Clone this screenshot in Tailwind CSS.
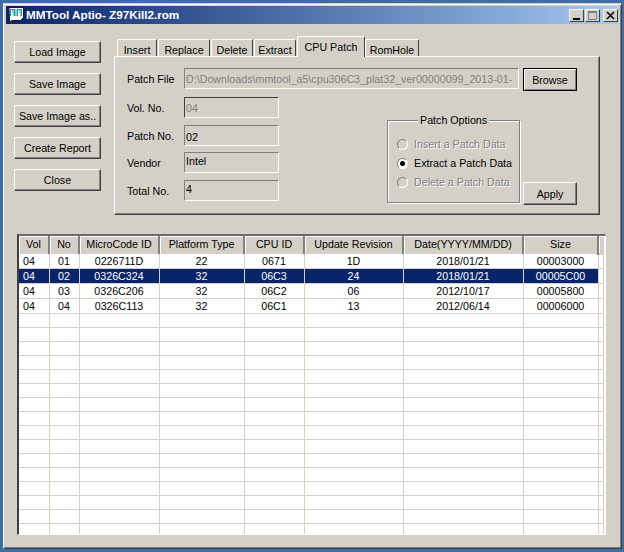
<!doctype html>
<html>

<head>
    <meta charset="UTF-8">
    <meta name="viewport" content="width=device-width, initial-scale=1.0">
    <script src="https://cdn.jsdelivr.net/npm/@tailwindcss/browser@4"></script>
</head>

<body class="w-[624px] h-[552px] overflow-hidden bg-[#3a6ea5] font-['Liberation_Sans',sans-serif] text-[10.7px] leading-[14px] text-black">
    <!-- window -->
    <div class="mt-[3px] ml-[3px] w-[619px] h-[546px] bg-[#d4d0c8] border border-t-[#d4d0c8] border-l-white border-r-[#404040] border-b-[#404040] shadow-[inset_0_1px_0_white,inset_-1px_-1px_0_#808080] p-[2px] flex flex-col">
        <!-- title bar -->
        <div class="h-[18px] shrink-0 flex items-center pl-[2px] pr-[1px] bg-gradient-to-r from-[#0a246a] to-[#a6caf0]">
            <svg class="w-4 h-4 shrink-0" viewBox="0 0 16 16">
                <path d="M1 .5h14.500v10l-3 3H4l-2.500 2z" fill="#fff" stroke="#0a1a40" />
                <rect x="2" y="2" width="5.500" height="7" fill="#1f9a94" />
                <rect x="8.500" y="2" width="5.500" height="7" fill="#1f9a94" />
                <path d="M3 9V3h1v3h.500V3h1v6M10 9V3h1v3h.500V3h1v6" fill="#fff" />
            </svg>
            <span class="ml-[2px] text-white font-bold text-[11.7px] whitespace-nowrap">MMTool Aptio- Z97Kill2.rom</span>
            <div class="ml-auto flex items-center">
                <div class="w-[15px] h-[13px] bg-[#d4d0c8] border border-t-white border-l-white border-r-[#404040] border-b-[#404040] flex items-end justify-center pb-[1px]"><div class="w-[7px] h-[2px] bg-black"></div></div>
                <div class="w-[15px] h-[13px] ml-[1px] bg-[#d4d0c8] border border-t-white border-l-white border-r-[#404040] border-b-[#404040] flex items-center justify-center"><div class="w-[9px] h-[9px] border border-[#808080] border-t-2"></div></div>
                <div class="w-[15px] h-[13px] ml-[3px] bg-[#d4d0c8] border border-t-white border-l-white border-r-[#404040] border-b-[#404040] flex items-center justify-center">
                    <svg class="w-[9px] h-[9px]" viewBox="0 0 9 9"><path d="M1 1l7 7M8 1L1 8" stroke="#000" stroke-width="1.500" /></svg>
                </div>
            </div>
        </div>

        <!-- top part -->
        <div class="flex h-[192px] shrink-0">
            <!-- left buttons -->
            <div class="w-[108px] shrink-0 pl-[8px] pt-[17px] flex flex-col gap-[10px]">
                <button class="w-[87px] h-[22px] pb-[1px] bg-[#d4d0c8] border border-t-white border-l-white border-r-[#404040] border-b-[#404040] shadow-[inset_-1px_-1px_0_#808080]">Load Image</button>
                <button class="w-[87px] h-[22px] bg-[#d4d0c8] border border-t-white border-l-white border-r-[#404040] border-b-[#404040] shadow-[inset_-1px_-1px_0_#808080]">Save Image</button>
                <button class="w-[87px] h-[22px] bg-[#d4d0c8] border border-t-white border-l-white border-r-[#404040] border-b-[#404040] shadow-[inset_-1px_-1px_0_#808080] whitespace-nowrap">Save Image as..</button>
                <button class="w-[87px] h-[22px] bg-[#d4d0c8] border border-t-white border-l-white border-r-[#404040] border-b-[#404040] shadow-[inset_-1px_-1px_0_#808080]">Create Report</button>
                <button class="w-[87px] h-[22px] bg-[#d4d0c8] border border-t-white border-l-white border-r-[#404040] border-b-[#404040] shadow-[inset_-1px_-1px_0_#808080]">Close</button>
            </div>

            <!-- tabs -->
            <div class="w-[486px] shrink-0 pt-[12px]">
                <div class="flex items-end h-[20px] pl-[3px] relative z-10">
                    <div class="w-[40px] h-[17px] mr-[1px] text-center pt-[3px] border border-b-0 border-t-white border-l-white border-r-[#404040] rounded-t-[2px]">Insert</div>
                    <div class="w-[52px] h-[17px] mr-[1px] text-center pt-[3px] border border-b-0 border-t-white border-l-white border-r-[#404040] rounded-t-[2px]">Replace</div>
                    <div class="w-[42px] h-[17px] mr-[1px] text-center pt-[3px] border border-b-0 border-t-white border-l-white border-r-[#404040] rounded-t-[2px]">Delete</div>
                    <div class="w-[42px] h-[17px] mr-[1px] text-center pt-[3px] border border-b-0 border-t-white border-l-white border-r-[#404040] rounded-t-[2px]">Extract</div>
                    <div class="w-[68px] h-[21px] -mb-[1px] bg-[#d4d0c8] text-center pt-[3px] border border-b-0 border-t-white border-l-white border-r-[#404040] rounded-t-[2px]">CPU Patch</div>
                    <div class="w-[54px] h-[17px] text-center pt-[3px] border border-b-0 border-t-white border-l-white border-r-[#404040] rounded-t-[2px]">RomHole</div>
                </div>
                <div class="h-[159px] border border-t-white border-l-white border-r-[#404040] border-b-[#404040] shadow-[inset_-1px_-1px_0_#808080] pt-[11px] pl-[12px] flex">
                    <!-- field labels and boxes -->
                    <div class="w-[392px] shrink-0">
                        <div class="flex items-center h-[21px]">
                            <span class="w-[57px] shrink-0">Patch File</span>
                            <div class="w-[335px] h-[21px] border border-t-[#808080] border-l-[#808080] border-r-white border-b-white px-[1px] pt-[3px] text-[#808080] whitespace-nowrap overflow-hidden">D:\Downloads\mmtool_a5\cpu306C3_plat32_ver00000099_2013-01-</div>
                        </div>
                        <div class="flex items-center h-[21px] mt-[8px]">
                            <span class="w-[57px] shrink-0">Vol. No.</span>
                            <div class="w-[95px] h-[21px] border border-t-[#404040] border-l-[#404040] border-r-white border-b-white px-[1px] pt-[3px] text-[#808080]">04</div>
                        </div>
                        <div class="flex items-center h-[21px] mt-[7px]">
                            <span class="w-[57px] shrink-0">Patch No.</span>
                            <div class="w-[95px] h-[21px] border border-t-[#808080] border-l-[#808080] border-r-white border-b-white px-[1px] pt-[4px]">02</div>
                        </div>
                        <div class="flex items-center h-[21px] mt-[6px]">
                            <span class="w-[57px] shrink-0">Vendor</span>
                            <div class="w-[95px] h-[21px] border border-t-[#808080] border-l-[#808080] border-r-white border-b-white px-[1px] pt-[1px]">Intel</div>
                        </div>
                        <div class="flex items-center h-[21px] mt-[7px]">
                            <span class="w-[57px] shrink-0">Total No.</span>
                            <div class="w-[95px] h-[21px] border border-t-[#808080] border-l-[#808080] border-r-white border-b-white px-[1px] pt-[1px]">4</div>
                        </div>
                    </div>
                </div>
            </div>
        </div>

        <!-- list -->
        <div class="ml-[11px] mt-[18px] w-[589px] h-[301px] shrink-0 border-2 border-t-[#6b6b6b] border-l-[#404040] border-r-white border-b-white border-r border-b bg-white overflow-hidden">
            <table id="list" class="border-collapse table-fixed w-[585px]">
                <colgroup>
                    <col class="w-[30px]"><col class="w-[30px]"><col class="w-[80px]"><col class="w-[85px]">
                    <col class="w-[60px]"><col class="w-[99px]"><col class="w-[120px]"><col class="w-[75px]"><col>
                </colgroup>
                <thead>
                    <tr class="h-[18px] bg-[#d4d0c8] text-center">
                        <th class="font-normal pb-[2px] border-r-2 border-r-[#808080] shadow-[inset_1px_1px_0_white]">Vol</th>
                        <th class="font-normal pb-[2px] border-r-2 border-r-[#808080] shadow-[inset_1px_1px_0_white]">No</th>
                        <th class="font-normal pb-[2px] border-r-2 border-r-[#808080] shadow-[inset_1px_1px_0_white]">MicroCode ID</th>
                        <th class="font-normal pb-[2px] border-r-2 border-r-[#808080] shadow-[inset_1px_1px_0_white]">Platform Type</th>
                        <th class="font-normal pb-[2px] border-r-2 border-r-[#808080] shadow-[inset_1px_1px_0_white]">CPU ID</th>
                        <th class="font-normal pb-[2px] border-r-2 border-r-[#808080] shadow-[inset_1px_1px_0_white]">Update Revision</th>
                        <th class="font-normal pb-[2px] border-r-2 border-r-[#808080] shadow-[inset_1px_1px_0_white] whitespace-nowrap">Date(YYYY/MM/DD)</th>
                        <th class="font-normal pb-[2px] border-r-2 border-r-[#808080] shadow-[inset_1px_1px_0_white]">Size</th>
                        <th class="font-normal bg-[#d4d0c8] border-b-2 border-b-[#d4d0c8] shadow-[inset_1px_1px_0_white]"></th>
                    </tr>
                </thead>
                <tbody></tbody>
            </table>
        </div>
    </div>

    <!-- patch options and the two side buttons sit over the tab page -->
    <div class="absolute left-[387px] top-[120px] w-[133px] h-[83px] border border-[#808080] shadow-[inset_1px_1px_0_white,1px_1px_0_white]">
        <div class="absolute -top-[8px] left-[30px] px-[2px] bg-[#d4d0c8] whitespace-nowrap">Patch Options</div>
        <div class="mt-[16px] ml-[9px] flex items-center h-[14px] text-[#808080] [text-shadow:1px_1px_0_white]">
            <span class="w-[11px] h-[11px] rounded-full border border-[#808080] border-r-white border-b-white bg-[#d4d0c8]"></span><span class="ml-[6px] whitespace-nowrap">Insert a Patch Data</span>
        </div>
        <div class="mt-[5px] ml-[9px] flex items-center h-[14px]">
            <span class="w-[11px] h-[11px] rounded-full border border-[#808080] border-r-white border-b-white bg-white flex items-center justify-center"><span class="w-[5px] h-[5px] rounded-full bg-black"></span></span><span class="ml-[6px] whitespace-nowrap">Extract a Patch Data</span>
        </div>
        <div class="mt-[5px] ml-[9px] flex items-center h-[14px] text-[#808080] [text-shadow:1px_1px_0_white]">
            <span class="w-[11px] h-[11px] rounded-full border border-[#808080] border-r-white border-b-white bg-[#d4d0c8]"></span><span class="ml-[6px] whitespace-nowrap">Delete a Patch Data</span>
        </div>
    </div>
    <button class="absolute left-[523px] top-[68px] w-[54px] h-[23px] bg-[#d4d0c8] border border-black shadow-[inset_1px_1px_0_white,inset_-1px_-1px_0_#808080]">Browse</button>
    <button class="absolute left-[523px] top-[182px] w-[54px] h-[23px] bg-[#d4d0c8] border border-t-white border-l-white border-r-[#404040] border-b-[#404040] shadow-[inset_-1px_-1px_0_#808080]">Apply</button>

    <script>
        let data = [
            ['04', '01', '0226711D', '22', '0671', '1D', '2018/01/21', '00003000'],
            ['04', '02', '0326C324', '32', '06C3', '24', '2018/01/21', '00005C00'],
            ['04', '03', '0326C206', '32', '06C2', '06', '2012/10/17', '00005800'],
            ['04', '04', '0326C113', '32', '06C1', '13', '2012/06/14', '00006000'],
        ];
        let tableBody = document.querySelector('#list tbody');

        for (let i = 0; i < 20; i++) {
            let cells = data[i] || ['', '', '', '', '', '', '', ''];
            let row = document.createElement('tr');
            row.className = i == 1 ? 'h-[14px] bg-[#0a246a] text-white text-center' : 'h-[14px] text-center';
            row.innerHTML = cells.map((text, c) =>
                `<td class="border-[#d4d0c8] border-r border-b h-[14px] p-0 ${c == 0 ? 'text-left pl-[4px]' : ''}">${text}</td>`
            ).join('') + '<td class="bg-white border-[#d4d0c8] border-r border-b p-0 h-[14px]"></td>';
            tableBody.appendChild(row);
        }
    </script>
</body>

</html>
